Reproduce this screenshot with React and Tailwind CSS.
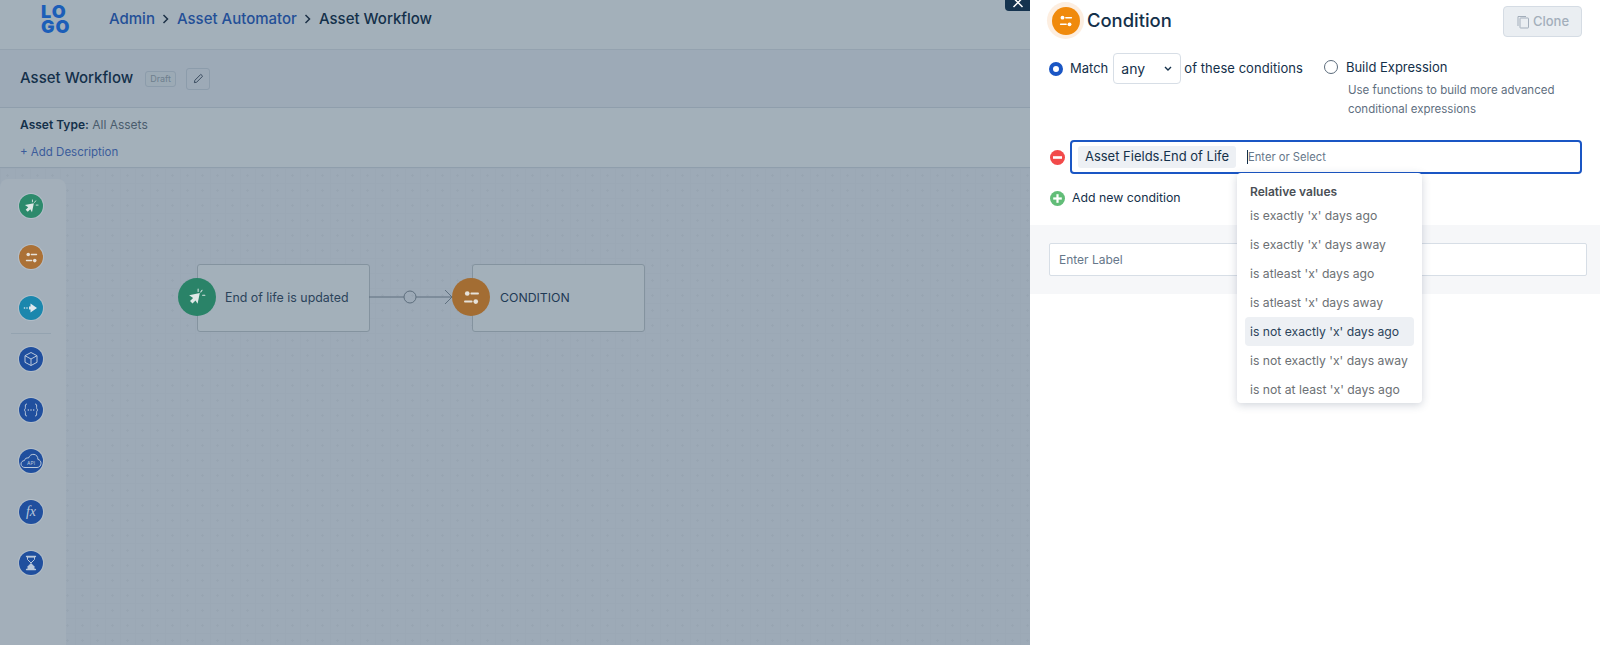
const Sliders = ({ s = 16, c = "white" }) => (
  <svg width={s} height={s} viewBox="0 0 16 16" fill="none">
    <circle cx="4" cy="4.2" r="2.2" fill={c} />
    <rect x="7" y="3.4" width="8" height="1.7" rx="0.8" fill={c} />
    <rect x="1" y="10.9" width="8" height="1.7" rx="0.8" fill={c} />
    <circle cx="12" cy="11.8" r="2.2" fill={c} />
  </svg>
);
const Cursor = ({ s = 16, c = "#dfe8e6" }) => (
  <svg width={s} height={s} viewBox="0 0 16 16" fill="none">
    <path d="M1 6.5 10.5 4.5 8.5 14 6.7 11 4 13.7 1.8 11.5 4.5 8.8Z" fill={c} />
    <path d="M9 1v2M12.5 2 11.3 3.6M15 6.5h-2" stroke={c} strokeWidth="0.9" strokeLinecap="round" />
  </svg>
);
const Send = () => (
  <svg width="16" height="16" viewBox="0 0 16 16" fill="none">
    <path d="M7.5 3.5 14 8l-6.5 4.5V9.5H6v-3h1.5Z" fill="#dfe8ee" />
    <circle cx="1.5" cy="8" r="0.8" fill="#dfe8ee" />
    <circle cx="4" cy="8" r="0.8" fill="#dfe8ee" />
  </svg>
);
const Box = () => (
  <svg width="16" height="16" viewBox="0 0 16 16" fill="none" stroke="#b9c7da" strokeWidth="1" strokeLinejoin="round">
    <path d="M8 1.5 14 4.7v6.6L8 14.5 2 11.3V4.7Z" />
    <path d="M2 4.7 8 8l6-3.3M8 8v6.5" />
  </svg>
);
const Braces = () => (
  <svg width="16" height="16" viewBox="0 0 16 16" fill="none" stroke="#b9c7da" strokeWidth="1" strokeLinecap="round">
    <path d="M3.5 2C2 2 2.4 3.5 2.4 5.5 2.4 7 1.8 7.6 1 8c.8.4 1.4 1 1.4 2.5 0 2-.4 3.5 1.1 3.5" />
    <path d="M12.5 2c1.5 0 1.1 1.5 1.1 3.5 0 1.5.6 2.1 1.4 2.5-.8.4-1.4 1-1.4 2.5 0 2 .4 3.5-1.1 3.5" />
    <path d="M5.3 8h.01M8 8h.01M10.7 8h.01" strokeWidth="1.5" />
  </svg>
);
const Cloud = () => (
  <svg width="22" height="18" viewBox="0 0 22 18" fill="none">
    <path d="M5 15.5C2.6 15.5 1 13.9 1 12s1.4-3.3 3.4-3.4C4.8 6.6 6.6 5.5 8.5 6 9.5 3.5 11.5 2 14 2.4c2.6.4 4 2.5 3.9 5 2 .4 3.1 2 3.1 3.8 0 2.4-1.8 4.3-4 4.3Z" stroke="#b9c7da" strokeWidth="1" />
    <text x="11" y="13" textAnchor="middle" fontSize="5" fill="#b9c7da" fontFamily="Inter, sans-serif">API</text>
  </svg>
);
const Hourglass = () => (
  <svg width="16" height="16" viewBox="0 0 16 16" fill="none">
    <path d="M3.5 1.5h9M3.5 14.5h9" stroke="#b9c7da" strokeWidth="1.3" strokeLinecap="round" />
    <path d="M4.5 2v2.5L8 8l3.5-3.5V2Z" stroke="#b9c7da" strokeWidth="1" />
    <path d="M8 8 4.5 11.5V14h7v-2.5Z" fill="#b9c7da" />
  </svg>
);

const Tool = ({ bg, children }) => (
  <div className={`w-6 h-6 rounded-full flex items-center justify-center ring-1 ring-[#b3bec8] ${bg}`}>
    {children}
  </div>
);

const Chev = () => (
  <svg width="9" height="10" viewBox="0 0 9 10" fill="none" stroke="#1c3147" strokeWidth="1.5">
    <path d="M2.5 1l4 4-4 4" />
  </svg>
);
const Breadcrumb = () => (
  <div className="flex items-center gap-[6.5px] text-[15px] leading-[20px] font-medium">
    <span className="text-[#234f97]">Admin</span>
    <Chev />
    <span className="text-[#234f97]">Asset Automator</span>
    <Chev />
    <span className="text-[#14304a]">Asset Workflow</span>
  </div>
);

const items = ["is exactly 'x' days ago", "is exactly 'x' days away", "is atleast 'x' days ago", "is atleast 'x' days away", "is not exactly 'x' days ago", "is not exactly 'x' days away", "is not at least 'x' days ago"];

export default function App() {
  return (
    <div className="relative flex w-[1600px] h-[645px] overflow-hidden bg-white text-[#14304a]" style={{ fontFamily: "Inter, 'Noto Sans', sans-serif" }}>
      <div className="w-[1030px] shrink-0 flex flex-col bg-[#a3b0ba]">
        <header className="h-[50px] shrink-0 flex items-start border-b border-[#94a2af]">
          <div className="w-[109px] shrink-0 pl-[41px] pt-[4px] font-black text-[#1c5eb8] text-[18px] leading-[15px] tracking-[1px]">
            <div>LO</div>
            <div>GO</div>
          </div>
          <div className="pt-[9px]"><Breadcrumb /></div>
        </header>
        <div className="h-[58px] shrink-0 flex items-center pl-5 border-b border-[#8f9eac] bg-[#9daab7]">
          <span className="text-[15px] font-medium text-[#14304a]">Asset Workflow</span>
          <span className="ml-3 h-4 px-[4px] flex items-center text-[9px] border border-[#8c9cab] rounded-[3px] bg-[#9caab5] text-[#6e7f8e]">Draft</span>
          <button className="ml-[10px] w-6 h-[22px] flex items-center justify-center border border-[#8c9cab] rounded-[3px]">
            <svg width="11" height="11" viewBox="0 0 12 12" fill="none" stroke="#2f4256" strokeWidth="1">
              <path d="M1.5 10.5 2 8 8.5 1.5l2 2L4 10Z" />
            </svg>
          </button>
        </div>
        <div className="h-[60px] shrink-0 pl-5 pt-[8px] border-b border-[#8f9eac] text-xs">
          <div className="leading-[18px] text-[#4a5c6d]"><span className="font-semibold text-[#14304a]">Asset Type:</span> All Assets</div>
          <div className="mt-[9px] leading-[18px] text-[11.5px] text-[#3b5c9b]">+ Add Description</div>
        </div>
        <main className="relative flex-1 bg-[#9daab7] bg-[radial-gradient(#98a5b2_1px,transparent_1.2px),linear-gradient(#9ba8b5_1px,transparent_1px),linear-gradient(90deg,#9ba8b5_1px,transparent_1px)] bg-[size:15px_15px]">
          <aside className="absolute left-0 top-[11px] bottom-0 w-[66px] bg-[#a3afba] rounded-t-lg flex flex-col items-center pt-[15px] pr-[4px] gap-[27px]">
            <Tool bg="bg-[#2d8a6c]"><Cursor s={15} /></Tool>
            <Tool bg="bg-[#ab7136]"><Sliders s={13} c="#e6e2da" /></Tool>
            <Tool bg="bg-[#1b87ad]"><Send /></Tool>
            <div className="w-10 h-px bg-[#94a3b0] -my-[14px]" />
            <Tool bg="bg-[#204f9e]"><Box /></Tool>
            <Tool bg="bg-[#204f9e]"><Braces /></Tool>
            <Tool bg="bg-[#204f9e]"><Cloud /></Tool>
            <Tool bg="bg-[#204f9e]"><span className="italic text-[#b9c7da] text-[14px] leading-none" style={{ fontFamily: "'Liberation Serif', serif" }}>fx</span></Tool>
            <Tool bg="bg-[#204f9e]"><Hourglass /></Tool>
          </aside>

          <div className="absolute left-[197px] top-[96px] w-[173px] h-[68px] flex items-center pl-[27px] text-[12.4px] text-[#2b435a] bg-[#a3b0ba] border border-[#84939f] rounded-[3px]">End of life is updated</div>
          <div className="absolute left-[178px] top-[110px] w-[38px] h-[38px] rounded-full bg-[#2a8368] flex items-center justify-center"><Cursor s={18} /></div>

          <svg className="absolute left-[369px] top-[119px]" width="90" height="20" fill="none" stroke="#5e6f7e">
            <path d="M0 10h35M47 10h36" strokeWidth="1" />
            <circle cx="41" cy="10" r="6" strokeWidth="1" />
            <path d="M76 3l7 7-7 7" strokeWidth="1" />
          </svg>

          <div className="absolute left-[472px] top-[96px] w-[173px] h-[68px] flex items-center pl-[27px] text-[12.3px] text-[#1f3a55] bg-[#a3b0ba] border border-[#84939f] rounded-[3px]">CONDITION</div>
          <div className="absolute left-[452px] top-[110px] w-[38px] h-[38px] rounded-full bg-[#a36d33] flex items-center justify-center"><Sliders s={17} c="#e6e2da" /></div>
        </main>
      </div>

      <aside className="relative flex-1 flex flex-col bg-white">
        <div className="absolute -left-[25px] top-0 w-[25px] h-[11px] bg-[#15334f] rounded-bl-sm flex items-start justify-center">
          <svg width="12" height="9" viewBox="0 0 12 9" fill="none" stroke="white" strokeWidth="1.5"><path d="M1.5 -2 10.5 7M10.5 -2 1.5 7" /></svg>
        </div>

        <div className="h-[41px] shrink-0 flex items-start pl-[17px] pr-[18px]">
          <div className="mt-[2px] w-[37px] h-[37px] rounded-full bg-[#fdeee0] flex items-center justify-center">
            <div className="w-[28px] h-[28px] rounded-full bg-[#f08a0c] flex items-center justify-center"><Sliders s={14} /></div>
          </div>
          <h1 className="ml-[3px] mt-[7px] text-[18.4px] leading-[26px] font-medium text-[#14304a]">Condition</h1>
          <button className="ml-auto mt-[6px] w-[79px] h-[31px] flex items-center justify-center gap-[3px] rounded border border-[#d5dce4] bg-[#eaeef2] text-[13px] font-medium text-[#a3aebb]">
            <svg width="14" height="14" viewBox="0 0 14 14" fill="none" stroke="#a3aebb" strokeWidth="1">
              <rect x="4" y="3" width="8.5" height="10" rx="0.5" />
              <path d="M2 11V1.5h8" />
            </svg>
            Clone
          </button>
        </div>

        <div className="mt-[12px] h-[87px] shrink-0 pl-[19px] flex items-start text-[13px]">
          <div className="flex items-center h-[31px]">
            <span className="w-[14px] h-[14px] rounded-full border-[4px] border-[#1a56c4] bg-white" />
            <span className="ml-[7px]">Match</span>
            <div className="ml-[5px] w-[68px] h-[31px] border border-[#d7dee6] rounded flex items-center justify-between pl-[7px] pr-[8px] text-[14px]">
              any
              <svg width="8" height="6" viewBox="0 0 8 6" fill="none" stroke="#14304a" strokeWidth="1.4"><path d="M1 1l3 3 3-3" /></svg>
            </div>
            <span className="ml-[3px] tracking-[0.05px]">of these conditions</span>
          </div>
          <div className="ml-[21px] flex items-start">
            <span className="mt-[7px] w-[14px] h-[14px] rounded-full border border-[#5b6b7b] bg-white" />
            <div className="ml-[2px]">
              <div className="ml-[1px] pl-[5px] h-[28px] leading-[28px]">Build Expression</div>
              <div className="mt-[0px] ml-[8px] text-[11.5px] leading-[19px] text-[#5f6f7f]">Use functions to build more advanced<br />conditional expressions</div>
            </div>
          </div>
        </div>

        <div className="ml-[20px] flex items-center">
          <svg width="15" height="15" viewBox="0 0 15 15"><circle cx="7.5" cy="7.5" r="7.5" fill="#f24a4a" /><rect x="3" y="6.2" width="9" height="2.6" fill="white" /></svg>
          <div className="ml-[5px] w-[512px] h-[34px] border-2 border-[#1a56c4] rounded flex items-center pl-[6px] text-[13px]">
            <span className="h-[22px] w-[158px] shrink-0 flex items-center justify-center rounded-[3px] bg-[#edf0f4]">Asset Fields.End of Life</span>
            <span className="ml-[11px] h-[14px] w-px bg-[#14304a]" />
            <span className="text-[11.2px] text-[#66778a]">Enter or Select</span>
          </div>
        </div>

        <div className="relative ml-[20px] mt-[17px] flex items-center h-[15px] text-[12.3px]">
          <svg width="15" height="15" viewBox="0 0 15 15"><circle cx="7.5" cy="7.5" r="7.5" fill="#62bd78" /><rect x="3.2" y="6.4" width="8.6" height="2.2" fill="white" /><rect x="6.4" y="3.2" width="2.2" height="8.6" fill="white" /></svg>
          <span className="ml-[7px]">Add new condition</span>
        </div>

        <div className="mt-[19px] h-[69px] shrink-0 bg-[#f6f7f9] pl-[19px] pr-[13px] pt-[18px]">
          <div className="h-[33px] border border-[#d7dee6] bg-white rounded-[2px] flex items-center pl-[9px] text-[12px] text-[#66778a]">Enter Label</div>
        </div>

        <div className="absolute left-[207px] top-[173px] w-[185px] h-[230px] bg-white rounded shadow-[0_2px_8px_rgba(40,60,90,0.22)] pl-[8px] pr-[8px] pt-[11px]">
          <div className="pl-[5px] h-[16px] leading-[16px] text-[12px] font-semibold text-[#4a4f55]">Relative values</div>
          <div className="mt-[1px] flex flex-col">
            {items.map((t, i) => (
              <div key={t} className={`h-[29px] leading-[29px] pl-[5px] rounded text-[12.2px] ${i === 4 ? "bg-[#edf0f4] text-[#2b435a]" : "text-[#6c7074]"}`}>{t}</div>
            ))}
          </div>
        </div>
      </aside>
    </div>
  );
}
